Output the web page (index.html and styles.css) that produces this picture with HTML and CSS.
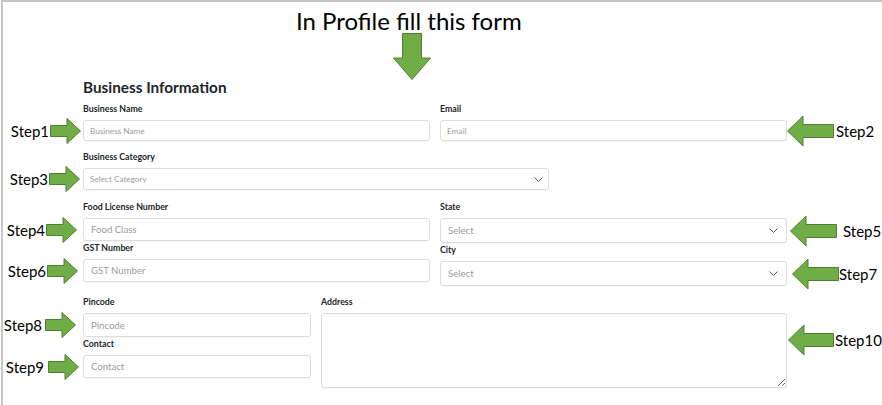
FILE: index.html
```html
<!DOCTYPE html>
<html lang="en">
<head>
<meta charset="utf-8">
<title>Business Information</title>
<link rel="stylesheet" href="styles.css">
</head>
<body>
<div class="frame">
  <header class="banner">
    <h1 class="banner-title">In Profile fill this form</h1>
    <svg class="down-arrow" width="38" height="47" viewBox="0 0 38 47"><path d="M9.5 0.5 H28.5 V25 H37.5 L19 46.5 L0.5 25 H9.5 Z" fill="#70ad47" stroke="#507e32"/></svg>
  </header>

  <form class="form">
    <h2 class="form-title">Business Information</h2>

    <div class="grid-2">
      <div class="field">
        <label class="label">Business Name</label>
        <div class="wrap">
          <input class="control sm h21" placeholder="Business Name">
          <div class="note note-left n1"><span>Step1</span><svg width="31" height="26" viewBox="0 0 31 26"><path d="M0.5 7.5 H17 V0.5 L30.5 13 L17 25.5 V18.5 H0.5 Z" fill="#70ad47" stroke="#507e32"/></svg></div>
        </div>
      </div>
      <div class="field">
        <label class="label">Email</label>
        <div class="wrap">
          <input class="control sm h21" placeholder="Email">
          <div class="note note-right n2"><svg width="47" height="31" viewBox="0 0 47 31"><path d="M0.5 15.5 L16 0.5 V9 H46.5 V22 H16 V30.5 Z" fill="#70ad47" stroke="#507e32"/></svg><span>Step2</span></div>
        </div>
      </div>
    </div>

    <div class="row-cat field">
      <label class="label">Business Category</label>
      <div class="wrap">
        <div class="control sm h22 select cat"><span class="ph">Select Category</span><svg width="9" height="5" viewBox="0 0 9 5"><path d="M0.5 0.5 L4.5 4.5 L8.5 0.5" fill="none" stroke="#555" stroke-width="1"/></svg></div>
        <div class="note note-left n3"><span>Step3</span><svg width="31" height="26" viewBox="0 0 31 26"><path d="M0.5 7.5 H17 V0.5 L30.5 13 L17 25.5 V18.5 H0.5 Z" fill="#70ad47" stroke="#507e32"/></svg></div>
      </div>
    </div>

    <div class="grid-2 row-3">
      <div class="col">
        <div class="field">
          <label class="label">Food License Number</label>
          <div class="wrap">
            <input class="control lg h23" placeholder="Food Class">
            <div class="note note-left n4"><span>Step4</span><svg width="31" height="26" viewBox="0 0 31 26"><path d="M0.5 7.5 H17 V0.5 L30.5 13 L17 25.5 V18.5 H0.5 Z" fill="#70ad47" stroke="#507e32"/></svg></div>
          </div>
        </div>
        <div class="field stacked">
          <label class="label">GST Number</label>
          <div class="wrap">
            <input class="control lg h23" placeholder="GST Number">
            <div class="note note-left n6"><span>Step6</span><svg width="31" height="26" viewBox="0 0 31 26"><path d="M0.5 7.5 H17 V0.5 L30.5 13 L17 25.5 V18.5 H0.5 Z" fill="#70ad47" stroke="#507e32"/></svg></div>
          </div>
        </div>
      </div>
      <div class="col">
        <div class="field">
          <label class="label">State</label>
          <div class="wrap">
            <div class="control lg h25 select"><span class="ph">Select</span><svg width="9" height="5" viewBox="0 0 9 5"><path d="M0.5 0.5 L4.5 4.5 L8.5 0.5" fill="none" stroke="#555" stroke-width="1"/></svg></div>
            <div class="note note-right n5"><svg width="47" height="31" viewBox="0 0 47 31"><path d="M0.5 15.5 L16 0.5 V9 H46.5 V22 H16 V30.5 Z" fill="#70ad47" stroke="#507e32"/></svg><span>Step5</span></div>
          </div>
        </div>
        <div class="field stacked">
          <label class="label">City</label>
          <div class="wrap">
            <div class="control lg h25 select"><span class="ph">Select</span><svg width="9" height="5" viewBox="0 0 9 5"><path d="M0.5 0.5 L4.5 4.5 L8.5 0.5" fill="none" stroke="#555" stroke-width="1"/></svg></div>
            <div class="note note-right n7"><svg width="47" height="31" viewBox="0 0 47 31"><path d="M0.5 15.5 L16 0.5 V9 H46.5 V22 H16 V30.5 Z" fill="#70ad47" stroke="#507e32"/></svg><span>Step7</span></div>
          </div>
        </div>
      </div>
    </div>

    <div class="grid-4-8 row-4">
      <div class="col">
        <div class="field">
          <label class="label">Pincode</label>
          <div class="wrap">
            <input class="control lg h24" placeholder="Pincode">
            <div class="note note-left n8"><span>Step8</span><svg width="31" height="26" viewBox="0 0 31 26"><path d="M0.5 7.5 H17 V0.5 L30.5 13 L17 25.5 V18.5 H0.5 Z" fill="#70ad47" stroke="#507e32"/></svg></div>
          </div>
        </div>
        <div class="field stacked">
          <label class="label">Contact</label>
          <div class="wrap">
            <input class="control lg h23" placeholder="Contact">
            <div class="note note-left n9"><span>Step9</span><svg width="31" height="26" viewBox="0 0 31 26"><path d="M0.5 7.5 H17 V0.5 L30.5 13 L17 25.5 V18.5 H0.5 Z" fill="#70ad47" stroke="#507e32"/></svg></div>
          </div>
        </div>
      </div>
      <div class="field">
        <label class="label">Address</label>
        <div class="wrap">
          <textarea class="control area"></textarea>
          <div class="note note-right n10"><svg width="46" height="31" viewBox="0 0 46 31"><path d="M0.5 15.5 L16 0.5 V9 H45.5 V22 H16 V30.5 Z" fill="#70ad47" stroke="#507e32"/></svg><span>Step10</span></div>
        </div>
      </div>
    </div>
  </form>
</div>
</body>
</html>
```

FILE: styles.css
```css
* { box-sizing: border-box; }

body {
  margin: 0;
  background: #fff;
  font-family: Lato, "Noto Sans", sans-serif;
}

.frame {
  margin-left: 1px;
  height: 405px;
  border-top: 2px solid #c4c4c4;
  border-left: 2px solid #c8c8c8;
  overflow: hidden;
}

.banner {
  display: flex;
  flex-direction: column;
  align-items: flex-start;
}

.banner-title {
  margin: 5px 0 0 293px;
  font: 400 24px/28px Lato, sans-serif;
  color: #000;
}

.down-arrow {
  display: block;
  margin: -2px 0 0 390px;
}

.form {
  margin-left: 80px;
  width: 704px;
}

.form-title {
  margin: -1px 0 8px;
  font: 700 15.3px/17px Lato, sans-serif;
  color: #212529;
}

.label {
  display: block;
  height: 10px;
  margin-bottom: 6px;
  font: 700 8.8px/10px Lato, sans-serif;
  color: #212529;
}

.grid-2 {
  display: grid;
  grid-template-columns: 1fr 1fr;
  column-gap: 10px;
}

.grid-4-8 {
  display: grid;
  grid-template-columns: 228px 1fr;
  column-gap: 10px;
}

.row-cat {
  width: 466px;
  margin-top: 11px;
}

.row-3 { margin-top: 12px; }
.row-4 { margin-top: 11px; }

.stacked { margin-top: 2px; }

.wrap { position: relative; }

.control {
  display: block;
  width: 100%;
  margin: 0;
  border: 1px solid #dcdcdc;
  border-radius: 3px;
  background: #fff;
  color: #333;
  outline: none;
  box-shadow: 0 1px 1px rgba(0, 0, 0, 0.03);
}

.control::placeholder { color: #9b9b9b; opacity: 1; }

.sm { padding: 0 6px; font: 400 8.2px Lato, sans-serif; }
.lg { padding: 0 7px; font: 400 9.6px Lato, sans-serif; }

.h21 { height: 21px; }
.h22 { height: 22px; }
.h23 { height: 23px; }
.h24 { height: 24px; }
.h25 { height: 25px; }

.select {
  display: flex;
  align-items: center;
  justify-content: space-between;
  padding-right: 8px;
}

.select.cat { padding-right: 5px; }

.select svg { display: block; flex: none; }

.ph { color: #9b9b9b; }

.area {
  height: 75px;
  resize: both;
  font: 400 9.5px Lato, sans-serif;
}

/* callout annotations laid over the form */
.note {
  position: absolute;
  top: 50%;
  transform: translateY(-50%);
  display: flex;
  align-items: center;
  font: 400 15px/18px Lato, sans-serif;
  color: #000;
  white-space: nowrap;
}

.note svg { display: block; flex: none; }

.note-left { right: 100%; gap: 1px; }
.note-right { left: 100%; gap: 2px; }

.n1 { margin-right: 2px; }
.n3 { margin-right: 3px; }
.n4 { margin-right: 6px; }
.n6 { margin-right: 5px; }
.n8 { margin-right: 7px; gap: 3px; }
.n9 { margin-right: 4px; gap: 4px; }

.n2 { margin-left: 0; }
.n5 { margin-left: 3px; gap: 6px; }
.n7 { margin-left: 5px; gap: 0; }
.n10 { margin-left: 1px; margin-top: -11px; gap: 1px; }
```
